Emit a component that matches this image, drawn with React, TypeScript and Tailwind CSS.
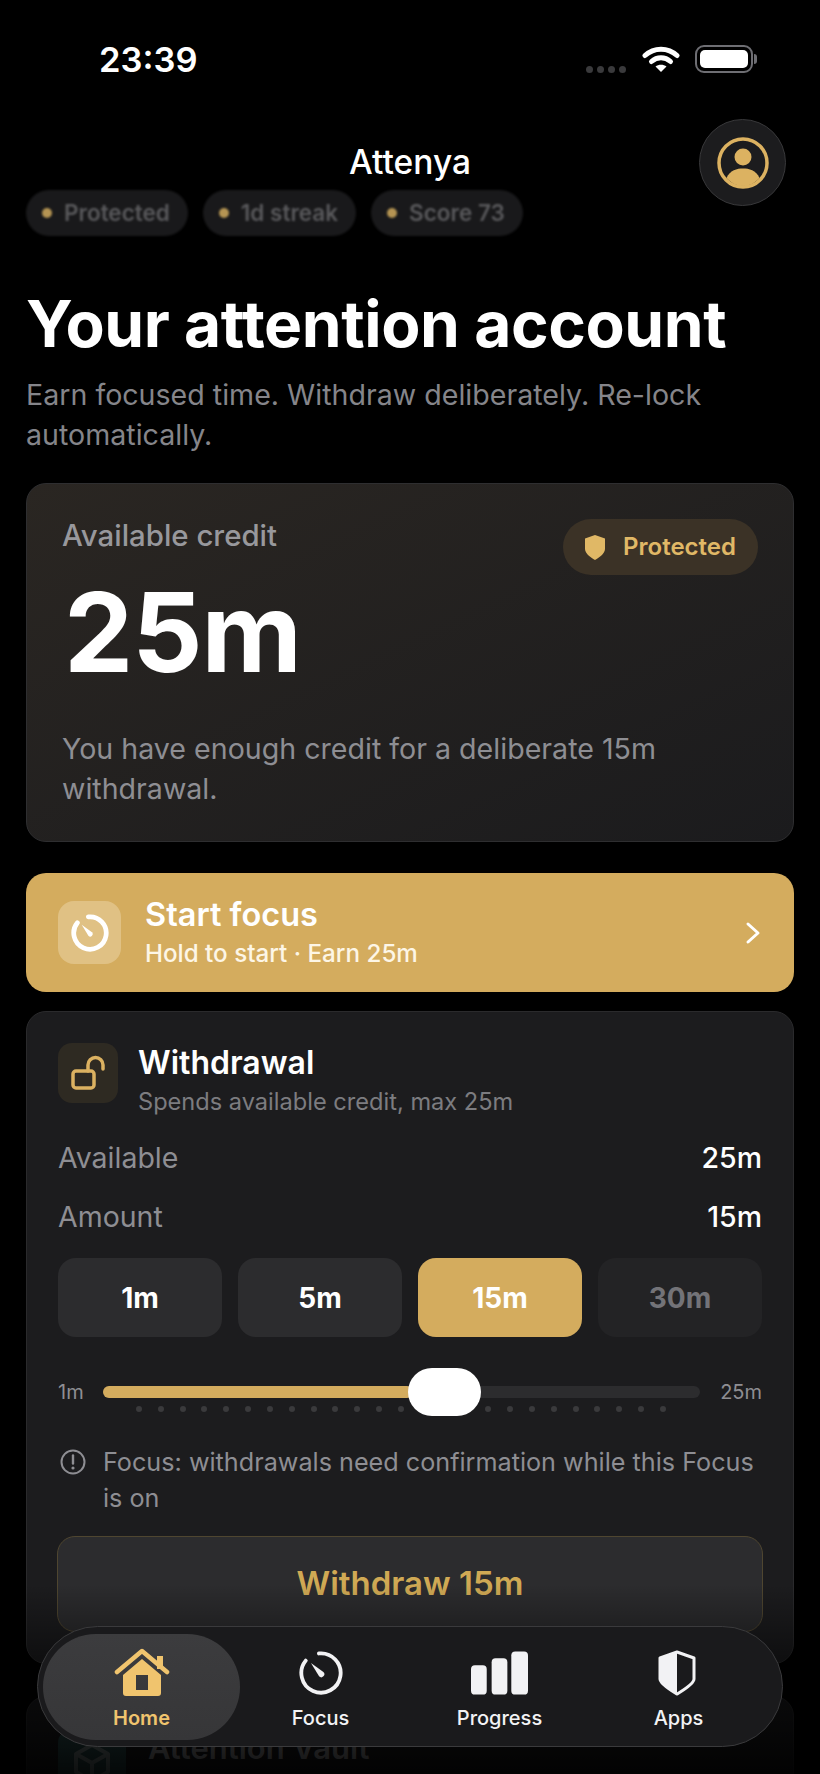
import React from 'react';

const font = { fontFamily: 'Inter, "Noto Sans", sans-serif' };

const Chip = ({ label }: { label: string }) => (
  <div className="flex h-[46px] items-center gap-[12px] rounded-full bg-[#1c1c1e] pl-[16px] pr-[18px]">
    <span className="h-[10px] w-[10px] rounded-full bg-[#c9a55c]" />
    <span className="text-[22.5px] font-semibold text-[#636366]">{label}</span>
  </div>
);

const Row = ({ label, value }: { label: string; value: string }) => (
  <div className="flex h-[59px] items-center justify-between">
    <span className="text-[28.5px] text-[#8e8e93]">{label}</span>
    <span className="text-[28.5px] font-medium text-white">{value}</span>
  </div>
);

const Amount = ({ label, state }: { label: string; state?: 'on' | 'off' }) => (
  <div
    className={
      state === 'on'
        ? 'flex h-[79px] flex-1 items-center justify-center rounded-[18px] bg-[#d4ac5e] text-[28px] font-bold text-white'
        : state === 'off'
          ? 'flex h-[79px] flex-1 items-center justify-center rounded-[18px] bg-[#232325] text-[28px] font-bold text-[#737378]'
          : 'flex h-[79px] flex-1 items-center justify-center rounded-[18px] bg-[#2c2c2e] text-[28px] font-bold text-white'
    }
  >
    {label}
  </div>
);

const HomeIcon = () => (
  <svg width="56" height="50" viewBox="0 0 56 50" fill="none">
    <path d="M3 24 L28 3 L53 24" stroke="#f0c46e" strokeWidth="4.5" strokeLinecap="round" strokeLinejoin="round" />
    <path d="M43 8h6v13h-6z" fill="#f0c46e" />
    <path
      fillRule="evenodd"
      d="M28 11 L47 27 V45 a3 3 0 0 1-3 3 H12 a3 3 0 0 1-3-3 V27 Z M22 27 v15 h12 V27 Z"
      fill="#f0c46e"
    />
  </svg>
);

const FocusIcon = ({ size, color, weight = 4 }: { size: number; color: string; weight?: number }) => (
  <svg width={size} height={size} viewBox="0 0 48 48" fill="none">
    <path
      d="M24 3.5 A20.5 20.5 0 1 1 9.5 9.5"
      stroke={color}
      strokeWidth={weight}
      strokeLinecap="round"
      transform="rotate(-6 24 24)"
    />
    <path d="M13.5 13.5 L26.5 23 A3 3 0 0 1 22 27.5 Z" fill={color} />
  </svg>
);

const BarsIcon = () => (
  <svg width="57" height="44" viewBox="0 0 58 44" fill="#f2f2f4">
    <rect x="0" y="14" width="16" height="30" rx="4" />
    <rect x="21" y="7" width="16" height="37" rx="4" />
    <rect x="41" y="0" width="17" height="44" rx="4" />
  </svg>
);

const ShieldIcon = () => (
  <svg width="38" height="46" viewBox="0 0 38 46" fill="none" className="-ml-[3px]">
    <path d="M19 2 L36 8 V29 C36 34 24 41 19 44 C14 41 2 34 2 29 V8 Z" stroke="#f2f2f4" strokeWidth="3" strokeLinejoin="round" />
    <path d="M19 2 L2 8 V29 C2 34 14 41 19 44 Z" fill="#f2f2f4" />
  </svg>
);

const NavItem = ({ label, icon }: { label: string; icon: React.ReactNode }) => (
  <div className="flex h-[106px] w-[179px] flex-col items-center pt-[15px]">
    <div className="flex h-[48px] items-center justify-center">{icon}</div>
    <span className="mt-[6px] text-[20px] font-medium text-[#f2f2f4]">{label}</span>
  </div>
);

export default function App() {
  return (
    <div className="relative h-[1774px] w-[820px] overflow-hidden bg-black" style={font}>
      {/* status bar */}
      <div className="flex h-[119px] items-start justify-between pl-[99px] pr-[63px] pt-[39px]">
        <span className="text-[34.5px] font-semibold leading-[42px] text-white">23:39</span>
        <div className="flex items-center pt-[6px]">
          <div className="mr-[16px] mt-[20px] flex gap-[4px]">
            <span className="h-[7px] w-[7px] rounded-full bg-[#3a3a3c]" />
            <span className="h-[7px] w-[7px] rounded-full bg-[#3a3a3c]" />
            <span className="h-[7px] w-[7px] rounded-full bg-[#3a3a3c]" />
            <span className="h-[7px] w-[7px] rounded-full bg-[#3a3a3c]" />
          </div>
          <svg width="38" height="28" viewBox="0 0 38 28" fill="none" className="mr-[15px]">
            <path d="M3 10.5 C12 2 26 2 35 10.5" stroke="white" strokeWidth="5" strokeLinecap="round" />
            <path d="M9.5 16.5 C15 11.5 23 11.5 28.5 16.5" stroke="white" strokeWidth="5" strokeLinecap="round" />
            <path d="M19 27 L13.5 21.5 C16.5 19 21.5 19 24.5 21.5 Z" fill="white" />
          </svg>
          <div className="flex items-center">
            <div className="h-[28px] w-[58px] rounded-[9px] border-[2px] border-[#6e6e73] p-[3px]">
              <div className="h-full w-full rounded-[5px] bg-white" />
            </div>
            <div className="ml-[1px] h-[10px] w-[3px] rounded-r-full bg-[#6e6e73]" />
          </div>
        </div>
      </div>

      {/* header */}
      <div className="grid h-[87px] grid-cols-[1fr_auto_1fr] items-center pr-[34px]">
        <div />
        <span className="ml-[34px] text-[33.5px] font-medium text-white">Attenya</span>
        <div className="flex justify-end">
          <div className="flex h-[87px] w-[87px] items-center justify-center rounded-full border border-[#38383a] bg-[#1c1c1e]">
            <svg width="52" height="52" viewBox="0 0 52 52" fill="none">
              <circle cx="26" cy="26" r="24" stroke="#dcb261" strokeWidth="3.5" />
              <circle cx="26" cy="20" r="8.5" fill="#dcb261" />
              <path d="M9.5 41 C13 33 20 31.5 26 31.5 C32 31.5 39 33 42.5 41 C38 46 32 49 26 49 C20 49 14 46 9.5 41 Z" fill="#dcb261" />
            </svg>
          </div>
        </div>
      </div>

      <div className="-mt-[16px] flex gap-[15px] pl-[26px] opacity-90 blur-[1.2px]">
        <Chip label="Protected" />
        <Chip label="1d streak" />
        <Chip label="Score 73" />
      </div>

      <div className="flex flex-col px-[26px]">
        <h1 className="mt-[51px] text-[64px] font-bold leading-[74px] tracking-[-0.4px] text-white">Your attention account</h1>
        <p className="mt-[14px] text-[28.6px] leading-[40px] text-[#85858a]">
          Earn focused time. Withdraw deliberately. Re-lock automatically.
        </p>

        {/* credit card */}
        <div className="relative mt-[28px] h-[359px] rounded-[20px] border border-[#2e2e30] bg-gradient-to-br from-[#2a2622] to-[#1b1b1d] px-[36px] pt-[32px]">
          <div className="flex items-start justify-between">
            <span className="-ml-[1px] text-[29.4px] font-medium leading-[40px] text-[#98989c]">Available credit</span>
            <div className="-mr-[1px] mt-[3px] flex h-[56px] items-center gap-[18px] rounded-full bg-[#3b3226] pl-[22px] pr-[22px]">
              <svg width="20" height="25" viewBox="0 0 20 25" fill="#e0b866">
                <path d="M10 0 L20 3.5 V14 C20 19 13 23 10 25 C7 23 0 19 0 14 V3.5 Z" />
              </svg>
              <span className="text-[24px] font-semibold text-[#e0b866]">Protected</span>
            </div>
          </div>
          <div className="-mt-[8px] ml-[1px] text-[110px] font-bold leading-[130px] tracking-[-1px] text-white">25m</div>
          <p className="mt-[32px] -ml-[1px] w-[640px] text-[28.6px] leading-[40px] text-[#8e8e93]">
            You have enough credit for a deliberate 15m withdrawal.
          </p>
        </div>

        {/* start focus */}
        <div className="mt-[31px] flex h-[119px] items-center rounded-[20px] bg-[#d4ac5e] pl-[32px] pr-[32px]">
          <div className="flex h-[63px] w-[63px] items-center justify-center rounded-[16px] bg-[#e0c184]">
            <FocusIcon size={38} color="white" weight={6} />
          </div>
          <div className="ml-[24px] flex-1">
            <div className="text-[32.5px] font-semibold leading-[38px] text-white">Start focus</div>
            <div className="mt-[5px] text-[24.2px] font-medium leading-[30px] text-[#fdf6e6]">Hold to start · Earn 25m</div>
          </div>
          <svg width="18" height="24" viewBox="0 0 18 24" fill="none">
            <path d="M4 3 L14 12 L4 21" stroke="white" strokeWidth="3" strokeLinecap="round" strokeLinejoin="round" />
          </svg>
        </div>

        {/* withdrawal */}
        <div className="mt-[19px] h-[653px] rounded-[20px] border border-[#2a2a2c] bg-[#1c1c1e] px-[31px] pt-[31px]">
          <div className="flex h-[62px] items-start">
            <div className="flex h-[60px] w-[60px] items-center justify-center rounded-[14px] bg-[#2e2a22]">
              <svg width="36" height="36" viewBox="0 0 36 36" fill="none">
                <rect x="3" y="16" width="21" height="17" rx="3" stroke="#dcb261" strokeWidth="3.5" />
                <path d="M18 16 V10 A7.5 7.5 0 0 1 33 10 V14" stroke="#dcb261" strokeWidth="3.5" strokeLinecap="round" />
              </svg>
            </div>
            <div className="ml-[20px]">
              <div className="mt-[1px] text-[32px] font-semibold leading-[38px] text-white">Withdrawal</div>
              <div className="mt-[5px] text-[23.6px] leading-[30px] text-[#7c7c80]">Spends available credit, max 25m</div>
            </div>
          </div>
          <div className="mt-[24px]">
            <Row label="Available" value="25m" />
            <Row label="Amount" value="15m" />
          </div>
          <div className="mt-[11px] flex gap-[16px]">
            <Amount label="1m" />
            <Amount label="5m" />
            <Amount label="15m" state="on" />
            <Amount label="30m" state="off" />
          </div>
          {/* slider */}
          <div className="mt-[31px] flex h-[48px] items-center">
            <span className="w-[45px] text-[20px] text-[#8e8e93]">1m</span>
            <div className="relative h-[12px] flex-1 rounded-full bg-[#2c2c2e]">
              <div className="h-full w-[310px] rounded-full bg-[#d4ac5e]" />
              <div className="absolute left-[305px] top-[-18px] h-[48px] w-[73px] rounded-[24px] bg-white" />
              <div className="absolute left-[33px] top-[20px] flex w-[530px] justify-between">
                {Array.from({ length: 25 }).map((_, i) => (
                  <span key={i} className={i >= 13 && i <= 15 ? 'h-[6px] w-[6px] rounded-full bg-transparent' : 'h-[6px] w-[6px] rounded-full bg-[#3a3a3c]'} />
                ))}
              </div>
            </div>
            <span className="w-[62px] text-right text-[20px] text-[#8e8e93]">25m</span>
          </div>
          {/* notice */}
          <div className="mt-[28px] flex">
            <svg width="26" height="26" viewBox="0 0 26 26" fill="none" className="ml-[2px] mt-[5px] shrink-0">
              <circle cx="13" cy="13" r="11.5" stroke="#8e8e93" strokeWidth="2" />
              <path d="M13 6.5 V14.5" stroke="#8e8e93" strokeWidth="2.4" strokeLinecap="round" />
              <circle cx="13" cy="19" r="1.6" fill="#8e8e93" />
            </svg>
            <p className="ml-[17px] text-[25.2px] leading-[36px] text-[#8e8e93]">Focus: withdrawals need confirmation while this Focus is on</p>
          </div>
          <div className="-mx-[1px] mt-[20px] flex h-[96px] items-center justify-center rounded-[18px] border border-[#4f4630] bg-[#2c2c2e] text-[33px] font-semibold text-[#d0a954]">
            Withdraw 15m
          </div>
        </div>

        {/* next card, mostly under the nav */}
        <div className="mt-[32px] h-[200px] rounded-[20px] border border-[#2a2a2c] bg-[#1c1c1e] px-[31px] pt-[32px]">
          <div className="flex items-start">
            <div className="flex h-[68px] w-[68px] items-center justify-center rounded-[14px] bg-[#2f5555]">
              <svg width="36" height="40" viewBox="0 0 36 40" fill="none" stroke="#8a9a9a" strokeWidth="4">
                <path d="M18 2 L34 11 V29 L18 38 L2 29 V11 Z" strokeLinejoin="round" />
                <path d="M2 11 L18 20 L34 11 M18 20 V38" />
              </svg>
            </div>
            <div className="ml-[22px] text-[31px] font-semibold leading-[38px] text-[#a8a8ac]">Attention Vault</div>
          </div>
        </div>
      </div>

      {/* fade under the nav */}
      <div className="pointer-events-none absolute inset-x-0 bottom-0 h-[190px] bg-gradient-to-b from-transparent via-black/60 to-black/90" />

      {/* tab bar */}
      <div className="absolute left-[37px] top-[1626px] flex h-[121px] w-[746px] items-center rounded-full border border-[#3a3a3c] bg-[#1a1a1c] pl-[5px]">
        <div className="-mr-[9px] flex h-[106px] w-[197px] flex-col items-center rounded-full bg-gradient-to-b from-[#3c3c3e] to-[#363638] pt-[15px]">
          <div className="flex h-[48px] items-center justify-center">
            <HomeIcon />
          </div>
          <span className="mt-[6px] text-[20px] font-semibold text-[#f0c46e]">Home</span>
        </div>
        <NavItem label="Focus" icon={<FocusIcon size={46} color="#f2f2f4" />} />
        <NavItem label="Progress" icon={<BarsIcon />} />
        <NavItem label="Apps" icon={<ShieldIcon />} />
      </div>
    </div>
  );
}
